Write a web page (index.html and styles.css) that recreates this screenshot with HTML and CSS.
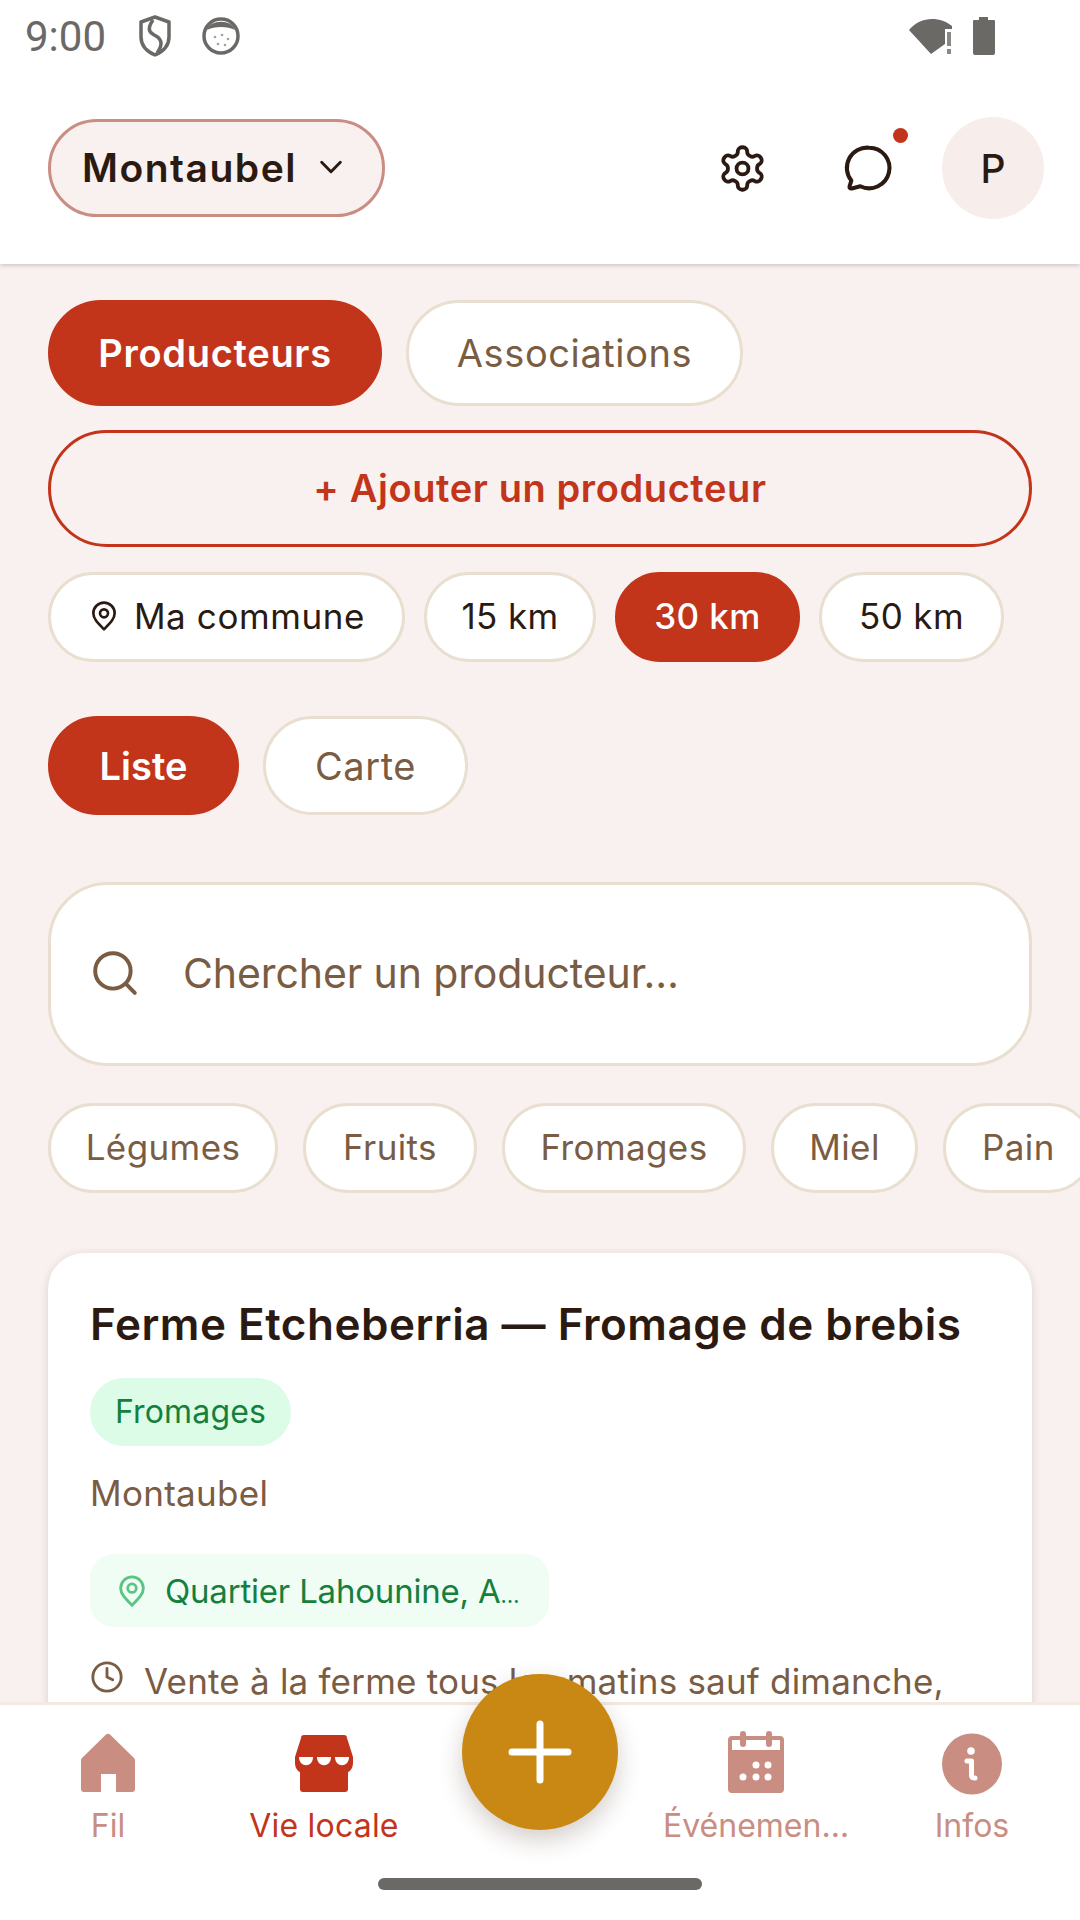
FILE: index.html
```html
<!DOCTYPE html>
<html lang="fr">
<head>
    <meta charset="UTF-8">
    <meta name="viewport" content="width=device-width, initial-scale=1.0">
    <title>Vie locale</title>
    <link rel="stylesheet" href="styles.css">
</head>
<body>
    <header class="top">
        <div class="status">
            <span class="time">9:00</span>
            <svg class="status-shield" viewBox="0 0 34 42"><path d="M17 2 L31 7 V22 C31 31 24 37 17 40 C10 37 3 31 3 22 V7 Z" fill="none" stroke="#6b6966" stroke-width="3.500" stroke-linejoin="round"/><path d="M15 5 C8 15 12 18 18 21 C25 25 24 31 19 38" fill="none" stroke="#6b6966" stroke-width="3.500"/></svg>
            <svg class="status-face" viewBox="0 0 38 38"><circle cx="19" cy="19" r="17" fill="#fff" stroke="#6b6966" stroke-width="3.500"/><path d="M5 13 C8 2 30 2 33 13 C26 9 12 9 5 13 Z" fill="#6b6966"/><g fill="#a3a19e"><circle cx="13" cy="20" r="1.300"/><circle cx="20" cy="18" r="1.300"/><circle cx="26" cy="22" r="1.300"/><circle cx="16" cy="27" r="1.300"/><circle cx="23" cy="28" r="1.300"/></g></svg>
            <span class="status-space"></span>
            <svg class="status-wifi" viewBox="0 0 46 40"><path d="M1 14 C12 0 32 0 44 10 V13 H37 V28 L23 38 Z" fill="#6b6966"/><path d="M39 16 H43 V30 H39 Z M39 33 H43 V38 H39 Z" fill="#8a8885"/></svg>
            <svg class="status-battery" viewBox="0 0 24 40"><path d="M7 1 H16 V4 H22 A1.500 1.500 0 0 1 23 5 V37 A2 2 0 0 1 21 39 H3 A2 2 0 0 1 1 37 V5 A1.500 1.500 0 0 1 2 4 H7 Z" fill="#6b6966"/></svg>
        </div>
        <div class="bar">
            <button class="town">Montaubel
                <svg viewBox="0 0 24 24" fill="none" stroke="#2b1a12" stroke-width="2.200" stroke-linecap="round" stroke-linejoin="round"><path d="M5 8.500 L12 15.500 L19 8.500"/></svg>
            </button>
            <div class="bar-icons">
                <svg class="icon-gear" viewBox="0 0 24 24" fill="none" stroke="#2b1a12" stroke-width="1.800" stroke-linecap="round" stroke-linejoin="round"><path d="M12.220 2h-.44a2 2 0 0 0-2 2v.18a2 2 0 0 1-1 1.730l-.43.25a2 2 0 0 1-2 0l-.15-.08a2 2 0 0 0-2.730.73l-.22.38a2 2 0 0 0 .73 2.730l.15.1a2 2 0 0 1 1 1.720v.51a2 2 0 0 1-1 1.740l-.15.09a2 2 0 0 0-.73 2.730l.22.38a2 2 0 0 0 2.730.73l.15-.08a2 2 0 0 1 2 0l.43.25a2 2 0 0 1 1 1.730V20a2 2 0 0 0 2 2h.44a2 2 0 0 0 2-2v-.18a2 2 0 0 1 1-1.730l.43-.25a2 2 0 0 1 2 0l.15.08a2 2 0 0 0 2.730-.73l.22-.39a2 2 0 0 0-.73-2.730l-.15-.08a2 2 0 0 1-1-1.740v-.5a2 2 0 0 1 1-1.740l.15-.09a2 2 0 0 0 .73-2.730l-.22-.38a2 2 0 0 0-2.730-.73l-.15.08a2 2 0 0 1-2 0l-.43-.25a2 2 0 0 1-1-1.730V4a2 2 0 0 0-2-2z"/><circle cx="12" cy="12" r="2.800"/></svg>
                <div class="chat">
                    <svg viewBox="0 0 24 24" fill="none" stroke="#2b1a12" stroke-width="1.800" stroke-linecap="round" stroke-linejoin="round"><path d="M12.500 3a9 9 0 1 1-3.900 17.100l-3.800 1a.8.8 0 0 1-1-1l.8-2.500A9 9 0 0 1 12.500 3z"/></svg>
                    <span class="chat-dot"></span>
                </div>
                <div class="avatar">P</div>
            </div>
        </div>
    </header>

    <main class="content">
        <div class="row tabs">
            <span class="pill pill-big on">Producteurs</span>
            <span class="pill pill-big">Associations</span>
        </div>
        <button class="add">+ Ajouter un producteur</button>
        <div class="row distances">
            <span class="pill chip dark">
                <svg viewBox="0 0 24 24" fill="none" stroke="#2b1a12" stroke-width="2"><path d="M12 22 C7 17 4 14 4 10 A8 8 0 0 1 20 10 C20 14 17 17 12 22 Z" stroke-linejoin="round"/><circle cx="12" cy="10" r="3"/></svg>
                Ma commune</span>
            <span class="pill chip dark">15 km</span>
            <span class="pill chip on">30 km</span>
            <span class="pill chip dark">50 km</span>
        </div>
        <div class="row views">
            <span class="pill pill-view on">Liste</span>
            <span class="pill pill-view">Carte</span>
        </div>
        <div class="search">
            <svg viewBox="0 0 24 24" fill="none" stroke="#7a5c43" stroke-width="1.900" stroke-linecap="round"><circle cx="11" cy="11" r="8.500"/><path d="M17.500 17.500 L21.500 21.500"/></svg>
            <span>Chercher un producteur…</span>
        </div>
        <div class="row cats">
            <span class="pill chip">Légumes</span>
            <span class="pill chip">Fruits</span>
            <span class="pill chip">Fromages</span>
            <span class="pill chip">Miel</span>
            <span class="pill chip">Pain</span>
        </div>
        <article class="card">
            <h2>Ferme Etcheberria — Fromage de brebis</h2>
            <span class="tag">Fromages</span>
            <p class="place">Montaubel</p>
            <div class="address">
                <svg viewBox="0 0 24 24" fill="none" stroke="#5ac583" stroke-width="2"><path d="M12 22 C7 17 4 14 4 10 A8 8 0 0 1 20 10 C20 14 17 17 12 22 Z" stroke-linejoin="round"/><circle cx="12" cy="10" r="3"/></svg>
                <span>Quartier Lahounine, A<span class="dots">…</span></span>
            </div>
            <div class="hours">
                <svg viewBox="0 0 24 24" fill="none" stroke="#7a5c43" stroke-width="2" stroke-linecap="round" stroke-linejoin="round"><circle cx="12" cy="12" r="10"/><path d="M12 6 V12 L16 14"/></svg>
                <span>Vente à la ferme tous les matins sauf dimanche,</span>
            </div>
        </article>
    </main>

    <nav class="nav">
        <div class="nav-item">
            <svg viewBox="-3 -2 62 62" fill="#c98d82"><path d="M25.500 2 a3.500 3.500 0 0 1 5 0 L54 25 a3 3 0 0 1 1 2.500 V56 a3 3 0 0 1-3 3 H36 V41 H21 V59 H4 a3 3 0 0 1-3-3 V27.500 a3 3 0 0 1 1-2.500 Z"/></svg>
            <span>Fil</span>
        </div>
        <div class="nav-item active">
            <svg viewBox="-1 -2 62 62" fill="#c2351a"><path d="M7 5 a3 3 0 0 1 3-3 H50 a3 3 0 0 1 3 3 L59 24 V30 C59 36 55 39 54 39 V56 a3 3 0 0 1-3 3 H9 a3 3 0 0 1-3-3 V39 C5 39 1 36 1 30 V24 Z"/><g fill="#fff"><path d="M5 24 H19 C19 35 5 35 5 24 Z"/><path d="M23 24 H37 C37 35 23 35 23 24 Z"/><path d="M41 24 H55 C55 35 41 35 41 24 Z"/></g></svg>
            <span>Vie locale</span>
        </div>
        <div class="nav-gap"></div>
        <div class="nav-item">
            <svg viewBox="-3 0 62 62" fill="#c98d82"><path fill-rule="evenodd" d="M4 5 H12 V3 a3 3 0 0 1 6 0 V5 H38 V3 a3 3 0 0 1 6 0 V5 H52 a4 4 0 0 1 4 4 V58 a4 4 0 0 1-4 4 H4 a4 4 0 0 1-4-4 V9 a4 4 0 0 1 4-4 Z M4 9 V19 H52 V9 H44 V13 a3 3 0 0 1-6 0 V9 H18 V13 a3 3 0 0 1-6 0 V9 Z"/><g fill="#fff"><circle cx="28" cy="34" r="3.500"/><circle cx="40" cy="34" r="3.500"/><circle cx="15" cy="46" r="3.500"/><circle cx="28" cy="46" r="3.500"/><circle cx="40" cy="46" r="3.500"/></g></svg>
            <span>Événemen…</span>
        </div>
        <div class="nav-item">
            <svg viewBox="-1 -2 62 62" fill="#c98d82"><ellipse cx="30" cy="31" rx="30" ry="30.500"/><circle cx="29" cy="18" r="3.800" fill="#fff"/><path d="M25 28 H29.500 V42 C29.500 45 31 45 33 45" fill="none" stroke="#fff" stroke-width="5" stroke-linecap="round" stroke-linejoin="round"/></svg>
            <span>Infos</span>
        </div>
        <button class="fab">
            <svg viewBox="0 0 64 64" fill="none" stroke="#fff" stroke-width="7" stroke-linecap="round"><path d="M32 4 V60 M4 32 H60"/></svg>
        </button>
        <div class="home"></div>
    </nav>
</body>
</html>
```

FILE: styles.css
```css
* {
    box-sizing: border-box;
}
body {
    display: flex;
    flex-direction: column;
    width: 1080px;
    height: 1920px;
    margin: 0;
    overflow: hidden;
    background-color: #f9f1ef;
    font-family: Inter, "Noto Sans", sans-serif;
    color: #7a5c43;
}
button {
    font-family: inherit;
}

/* Haut de page */
.top {
    height: 264px;
    flex-shrink: 0;
    background-color: #fff;
    box-shadow: 0 2px 4px rgba(0, 0, 0, 0.16);
    position: relative;
    z-index: 1;
}
.status {
    display: flex;
    align-items: center;
    height: 72px;
    padding-left: 25px;
    padding-right: 84px;
}
.time {
    font-family: Roboto, sans-serif;
    font-size: 42px;
    color: #6b6966;
    width: 113px;
}
.status-shield {
    width: 34px;
    height: 42px;
}
.status-face {
    width: 38px;
    height: 38px;
    margin-left: 30px;
}
.status-space {
    flex: 1;
}
.status-wifi {
    width: 46px;
    height: 40px;
}
.status-battery {
    width: 24px;
    height: 40px;
    margin-left: 18px;
}
.bar {
    display: flex;
    justify-content: space-between;
    align-items: center;
    padding: 0 36px 0 48px;
    height: 192px;
}
.town {
    display: flex;
    align-items: center;
    gap: 18px;
    height: 98px;
    width: 337px;
    padding: 0 0 2px 31px;
    background-color: #f9f1ef;
    border: 3px solid #c98d82;
    border-radius: 49px;
    font-size: 39px;
    font-weight: 600;
    letter-spacing: 1.500px;
    color: #2b1a12;
}
.town svg {
    width: 32px;
    height: 32px;
}
.bar-icons {
    display: flex;
    align-items: center;
}
.icon-gear {
    width: 51px;
    height: 51px;
}
.chat {
    position: relative;
    margin-left: 73px;
    width: 54px;
    height: 54px;
    margin-right: 47px;
}
.chat svg {
    width: 54px;
    height: 54px;
}
.chat-dot {
    position: absolute;
    top: -13px;
    right: -13px;
    width: 15px;
    height: 15px;
    border-radius: 50%;
    background-color: #c2351a;
}
.avatar {
    display: flex;
    justify-content: center;
    align-items: center;
    width: 102px;
    height: 102px;
    border-radius: 50%;
    background-color: #f7edeb;
    color: #2b1a12;
    font-size: 39px;
    font-weight: 500;
}

/* Contenu */
.content {
    flex: 1;
    min-height: 0;
    overflow: hidden;
    padding: 36px 0 0 48px;
}
.row {
    display: flex;
    white-space: nowrap;
}
.pill {
    display: inline-flex;
    justify-content: center;
    align-items: center;
    flex-shrink: 0;
    background-color: #fff;
    border: 3px solid #e8dfd0;
    border-radius: 60px;
    color: #7a5c43;
}
.pill.on {
    background-color: #c2351a;
    border-color: #c2351a;
    color: #fff;
    font-weight: 600;
}
.pill-big {
    height: 106px;
    font-size: 38px;
    letter-spacing: .6px;
}
.tabs {
    gap: 24px;
}
.tabs .pill:nth-child(1) {
    width: 334px;
    letter-spacing: .7px;
}
.tabs .pill:nth-child(2) {
    width: 337px;
}
.add {
    display: block;
    width: 984px;
    height: 117px;
    margin-top: 24px;
    padding-bottom: 3px;
    background-color: transparent;
    border: 3px solid #c2351a;
    border-radius: 59px;
    color: #c2351a;
    font-size: 38px;
    font-weight: 600;
    letter-spacing: .6px;
}
.chip {
    height: 90px;
    padding: 0 36px 2px;
    font-size: 35px;
    letter-spacing: .4px;
}
.chip.on {
    font-weight: 500;
}
.chip.dark {
    color: #2b1a12;
}
.chip svg {
    width: 32px;
    height: 32px;
    margin-right: 14px;
}
.distances {
    gap: 19px;
    margin-top: 25px;
}
.distances .pill:nth-child(1) {
    width: 357px;
    letter-spacing: .6px;
}
.distances .pill:nth-child(2) {
    width: 172px;
}
.distances .pill:nth-child(3) {
    width: 185px;
}
.distances .pill:nth-child(4) {
    width: 185px;
}
.views {
    gap: 24px;
    margin-top: 54px;
}
.pill-view {
    height: 99px;
    font-size: 38px;
}
.views .pill:nth-child(1) {
    width: 191px;
}
.views .pill:nth-child(2) {
    width: 205px;
    letter-spacing: .6px;
}
.search {
    display: flex;
    align-items: center;
    gap: 43px;
    width: 984px;
    height: 184px;
    margin-top: 67px;
    padding: 0 0 2px 39px;
    background-color: #fff;
    border: 3px solid #e8dfd0;
    border-radius: 60px;
    font-size: 41px;
    letter-spacing: -.1px;
}
.search svg {
    width: 50px;
    height: 50px;
}
.cats {
    gap: 25px;
    margin-top: 37px;
}
.cats .pill:nth-child(1) {
    width: 230px;
}
.cats .pill:nth-child(2) {
    width: 174px;
}
.cats .pill:nth-child(3) {
    width: 244px;
}
.cats .pill:nth-child(4) {
    width: 147px;
}
.card {
    width: 984px;
    height: 600px;
    margin-top: 60px;
    padding: 42px;
    background-color: #fff;
    border-radius: 36px;
    box-shadow: 0 2px 8px rgba(60, 30, 20, 0.16);
}
.card h2 {
    margin: 0;
    font-size: 44px;
    font-weight: 600;
    line-height: 58px;
    letter-spacing: .5px;
    color: #2b1a12;
}
.tag {
    display: inline-block;
    margin-top: 25px;
    height: 68px;
    padding: 0 25px;
    line-height: 68px;
    border-radius: 34px;
    background-color: #dcfce7;
    color: #15803d;
    font-size: 32px;
    letter-spacing: .15px;
}
.place {
    margin: 25px 0 0;
    font-size: 35px;
    line-height: 44px;
    letter-spacing: .3px;
}
.address {
    display: inline-flex;
    align-items: center;
    gap: 16px;
    width: 459px;
    height: 73px;
    margin-top: 39px;
    padding-left: 25px;
    border-radius: 24px;
    background-color: #f0fdf4;
    color: #15803d;
    font-size: 33px;
    letter-spacing: -.2px;
    white-space: nowrap;
}
.address svg {
    width: 34px;
    height: 34px;
}
.dots {
    font-size: 22px;
}
.hours {
    display: flex;
    gap: 20px;
    margin-top: 33px;
    font-size: 35px;
    letter-spacing: .2px;
    white-space: nowrap;
}
.hours svg {
    width: 34px;
    height: 34px;
    flex-shrink: 0;
}

/* Barre du bas */
.nav {
    position: relative;
    z-index: 2;
    display: grid;
    grid-template-columns: repeat(5, 216px);
    align-items: start;
    height: 218px;
    flex-shrink: 0;
    padding-top: 26px;
    background-color: #fff;
    border-top: 3px solid #f3e9e1;
}
.nav-item {
    display: flex;
    flex-direction: column;
    align-items: center;
    color: #c98d82;
    font-size: 32px;
    white-space: nowrap;
}
.nav-item svg {
    width: 62px;
    height: 62px;
    margin-bottom: 13px;
    overflow: visible;
}
.nav-item.active {
    color: #c2351a;
    letter-spacing: .2px;
}
.fab {
    position: absolute;
    top: -31px;
    left: 462px;
    display: flex;
    justify-content: center;
    align-items: center;
    width: 156px;
    height: 156px;
    padding: 0;
    border: none;
    border-radius: 50%;
    background-color: #c98714;
    box-shadow: 0 10px 24px rgba(60, 30, 20, 0.22);
}
.fab svg {
    width: 64px;
    height: 64px;
}
.home {
    position: absolute;
    left: 378px;
    bottom: 30px;
    width: 324px;
    height: 12px;
    border-radius: 6px;
    background-color: #6b6966;
}
```
